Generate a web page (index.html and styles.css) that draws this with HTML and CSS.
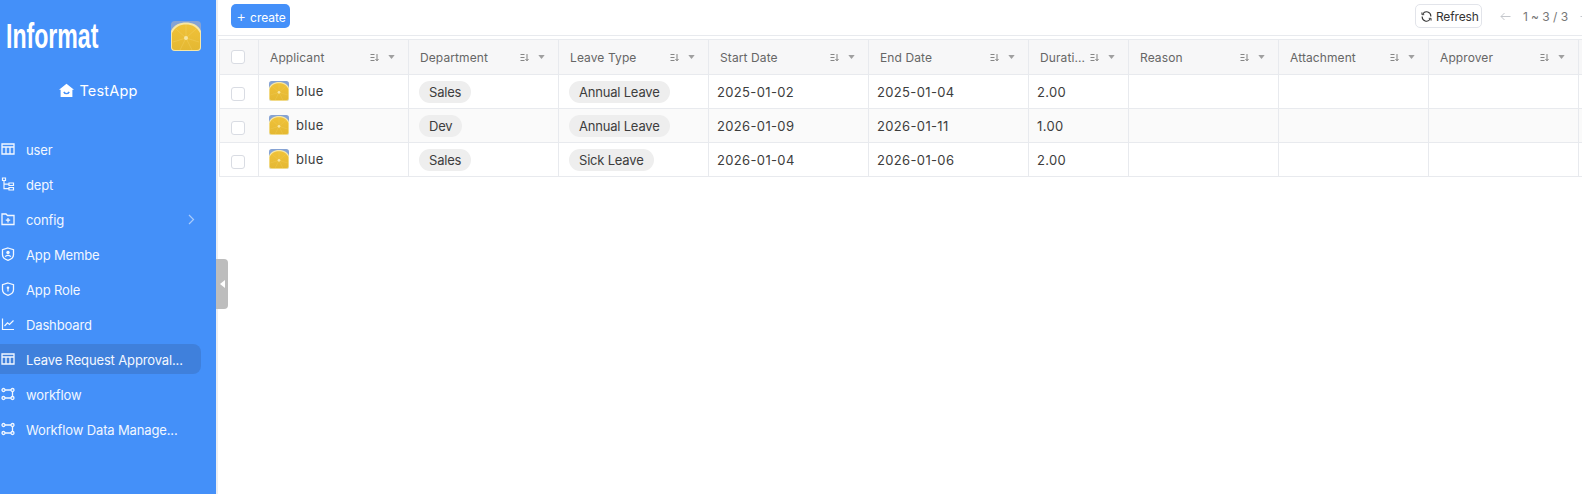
FILE: index.html
```html
<!DOCTYPE html>
<html lang="en">

<head>
    <meta charset="UTF-8">
    <meta name="viewport" content="width=device-width, initial-scale=1.0">
    <title>Leave Request Approval</title>
    <link rel="stylesheet" href="styles.css">
</head>

<body>
    <svg class="defs" width="0" height="0">
        <defs>
            <linearGradient id="lemon-fill" x1="0" y1="0" x2="0" y2="1">
                <stop offset="0" stop-color="#f0c238" />
                <stop offset="1" stop-color="#e4b833" />
            </linearGradient>
            <symbol id="lemon" viewBox="0 0 30 30">
                <rect width="30" height="30" rx="4" fill="#86a3d4" />
                <path d="M0 10 C3 3.500 9 1.500 15 1.500 C21 1.500 27 3.500 30 10 V26 a4 4 0 0 1 -4 4 H4 a4 4 0 0 1 -4 -4 Z" fill="#f7e7a6" />
                <path d="M1 12 C4 6 9 3.500 15 3.500 C21 3.500 26 6 29 12 V26 a3 3 0 0 1 -3 3 H4 a3 3 0 0 1 -3 -3 Z" fill="url(#lemon-fill)" />
                <path d="M15 17L5 8M15 17L15 4M15 17L25 8M15 17L28 21M15 17L2 21M15 17L9 29M15 17L21 29" stroke="#f5d365" stroke-width="0.600" opacity="0.700" />
                <circle cx="15" cy="17" r="2" fill="#f8e6a0" />
            </symbol>
            <symbol id="i-table" viewBox="0 0 14 14">
                <path d="M1 2h12v10H1zM1 5h12M5 5v7M9 5v7" fill="none" stroke="currentColor" stroke-width="1.300" />
            </symbol>
            <symbol id="i-tree" viewBox="0 0 14 14">
                <path d="M1.500 1h3v2.500h-3zM8 6h4.500v2.500H8zM8 10.500h4.500V13H8zM3 3.500V11.700h5M3 7.200h5" fill="none" stroke="currentColor" stroke-width="1.200" />
            </symbol>
            <symbol id="i-folder" viewBox="0 0 14 14">
                <path d="M1 2h4l1.500 1.500H13V12.500H1zM7 6v4.500M4.800 8.200h4.400" fill="none" stroke="currentColor" stroke-width="1.300" />
            </symbol>
            <symbol id="i-member" viewBox="0 0 14 14">
                <path d="M7 1l5.500 1.700v5C12.500 10.500 10 12.300 7 13.300 4 12.300 1.500 10.500 1.500 7.700v-5z" fill="none" stroke="currentColor" stroke-width="1.300" />
                <circle cx="7" cy="5.500" r="1.700" fill="currentColor" />
                <path d="M4.300 9.800C5 8 9 8 9.700 9.800" fill="none" stroke="currentColor" stroke-width="1.300" />
            </symbol>
            <symbol id="i-role" viewBox="0 0 14 14">
                <path d="M7 1l5.500 1.700v5C12.500 10.500 10 12.300 7 13.300 4 12.300 1.500 10.500 1.500 7.700v-5z" fill="none" stroke="currentColor" stroke-width="1.300" />
                <circle cx="7" cy="5.800" r="1.300" fill="currentColor" />
                <path d="M7 6.500v3" stroke="currentColor" stroke-width="1.200" />
            </symbol>
            <symbol id="i-chart" viewBox="0 0 14 14">
                <path d="M1.500 1.500V12.500H13M3.500 9l3-3.200 2 1.700L12.500 3.500" fill="none" stroke="currentColor" stroke-width="1.200" />
            </symbol>
            <symbol id="i-flow" viewBox="0 0 14 14">
                <circle cx="2.500" cy="3" r="1.500" fill="none" stroke="currentColor" stroke-width="1.300" />
                <circle cx="11.500" cy="3" r="1.500" fill="none" stroke="currentColor" stroke-width="1.300" />
                <circle cx="2.500" cy="11" r="1.500" fill="none" stroke="currentColor" stroke-width="1.300" />
                <circle cx="11.500" cy="11" r="1.500" fill="none" stroke="currentColor" stroke-width="1.300" />
                <path d="M4 3h6M11.500 4.500v5M10 11H4" fill="none" stroke="currentColor" stroke-width="1.300" />
            </symbol>
            <symbol id="i-sort" viewBox="0 0 9 9">
                <path d="M0.500 1.500h4M0.500 4.500h4M0.500 7.500h4M7 1v6.500M5.500 6l1.500 1.800L8.500 6" fill="none" stroke="currentColor" stroke-width="0.900" />
            </symbol>
            <symbol id="i-caret" viewBox="0 0 8 5">
                <path d="M0 0h8L4 5z" fill="currentColor" />
            </symbol>
            <symbol id="i-left" viewBox="0 0 11 9">
                <path d="M10.500 4.500H1M4.500 1L1 4.500 4.500 8" fill="none" stroke="currentColor" stroke-width="1" />
            </symbol>
            <symbol id="i-right" viewBox="0 0 11 9">
                <path d="M0.500 4.500H10M6.500 1L10 4.500 6.500 8" fill="none" stroke="currentColor" stroke-width="1" />
            </symbol>
        </defs>
    </svg>

    <aside class="sidebar">
        <div class="logo-row">
            <span class="logo-text">Informat</span>
            <svg class="logo-img"><use href="#lemon" /></svg>
        </div>

        <div class="app-name">
            <svg class="app-icon" viewBox="0 0 14 14">
                <path d="M7 .8L14 6.200H12.500V13H1.500V6.200H0Z" fill="#fff" />
                <path d="M4.500 8.300C5.500 10.500 8.500 10.500 9.500 8.300" fill="none" stroke="#4490f9" stroke-width="1.300" />
            </svg>
            <span>TestApp</span>
        </div>

        <nav class="menu">
            <a class="menu-item"><svg class="menu-icon"><use href="#i-table" /></svg><span class="menu-label">user</span></a>
            <a class="menu-item"><svg class="menu-icon"><use href="#i-tree" /></svg><span class="menu-label">dept</span></a>
            <a class="menu-item">
                <svg class="menu-icon"><use href="#i-folder" /></svg><span class="menu-label">config</span>
                <svg class="menu-arrow" viewBox="0 0 7 11"><path d="M1 1l4.500 4.500L1 10" fill="none" stroke="currentColor" stroke-width="1.200" /></svg>
            </a>
            <a class="menu-item"><svg class="menu-icon"><use href="#i-member" /></svg><span class="menu-label">App Membe</span></a>
            <a class="menu-item"><svg class="menu-icon"><use href="#i-role" /></svg><span class="menu-label">App Role</span></a>
            <a class="menu-item"><svg class="menu-icon"><use href="#i-chart" /></svg><span class="menu-label">Dashboard</span></a>
            <a class="menu-item active"><svg class="menu-icon"><use href="#i-table" /></svg><span class="menu-label">Leave Request Approval...</span></a>
            <a class="menu-item"><svg class="menu-icon"><use href="#i-flow" /></svg><span class="menu-label">workflow</span></a>
            <a class="menu-item"><svg class="menu-icon"><use href="#i-flow" /></svg><span class="menu-label">Workflow Data Manage...</span></a>
        </nav>
    </aside>

    <div class="collapse-handle"><span class="collapse-arrow"></span></div>

    <main class="content">
        <div class="toolbar">
            <button class="create-btn"><span class="plus">+</span>create</button>
            <div class="toolbar-right">
                <button class="refresh-btn">
                    <svg class="refresh-icon" viewBox="0 0 12 12">
                        <path d="M2 3.200A4.700 4.700 0 0 1 10.700 6M10 8.800A4.700 4.700 0 0 1 1.300 6" fill="none" stroke="#333" stroke-width="1.200" />
                        <path d="M1 1.500v2.500h2.500M11 10.500V8H8.500" fill="none" stroke="#333" stroke-width="1" />
                    </svg>
                    Refresh
                </button>
                <svg class="pager-arrow first"><use href="#i-left" /></svg>
                <span class="pager-text">1 ~ 3 / 3</span>
                <svg class="pager-arrow"><use href="#i-right" /></svg>
            </div>
        </div>

        <div class="table-wrap">
            <table class="grid">
                <colgroup>
                    <col class="col-check">
                    <col class="col-md">
                    <col class="col-md">
                    <col class="col-md">
                    <col class="col-lg">
                    <col class="col-lg">
                    <col class="col-sm">
                    <col class="col-md">
                    <col class="col-md">
                    <col class="col-md">
                    <col class="col-md">
                </colgroup>
                <thead>
                    <tr>
                        <th class="check-cell"><span class="check"></span></th>
                        <th><div class="th-inner"><span class="th-label">Applicant</span><svg class="sort"><use href="#i-sort" /></svg><svg class="caret"><use href="#i-caret" /></svg></div></th>
                        <th><div class="th-inner"><span class="th-label">Department</span><svg class="sort"><use href="#i-sort" /></svg><svg class="caret"><use href="#i-caret" /></svg></div></th>
                        <th><div class="th-inner"><span class="th-label">Leave Type</span><svg class="sort"><use href="#i-sort" /></svg><svg class="caret"><use href="#i-caret" /></svg></div></th>
                        <th><div class="th-inner"><span class="th-label">Start Date</span><svg class="sort"><use href="#i-sort" /></svg><svg class="caret"><use href="#i-caret" /></svg></div></th>
                        <th><div class="th-inner"><span class="th-label">End Date</span><svg class="sort"><use href="#i-sort" /></svg><svg class="caret"><use href="#i-caret" /></svg></div></th>
                        <th><div class="th-inner"><span class="th-label">Durati...</span><svg class="sort"><use href="#i-sort" /></svg><svg class="caret"><use href="#i-caret" /></svg></div></th>
                        <th><div class="th-inner"><span class="th-label">Reason</span><svg class="sort"><use href="#i-sort" /></svg><svg class="caret"><use href="#i-caret" /></svg></div></th>
                        <th><div class="th-inner"><span class="th-label">Attachment</span><svg class="sort"><use href="#i-sort" /></svg><svg class="caret"><use href="#i-caret" /></svg></div></th>
                        <th><div class="th-inner"><span class="th-label">Approver</span><svg class="sort"><use href="#i-sort" /></svg><svg class="caret"><use href="#i-caret" /></svg></div></th>
                        <th></th>
                    </tr>
                </thead>
                <tbody>
                    <tr>
                        <td class="check-cell"><span class="check"></span></td>
                        <td><div class="user"><svg class="avatar"><use href="#lemon" /></svg>blue</div></td>
                        <td><span class="tag">Sales</span></td>
                        <td><span class="tag">Annual Leave</span></td>
                        <td>2025-01-02</td>
                        <td>2025-01-04</td>
                        <td>2.00</td>
                        <td></td>
                        <td></td>
                        <td></td>
                        <td></td>
                    </tr>
                    <tr class="striped">
                        <td class="check-cell"><span class="check"></span></td>
                        <td><div class="user"><svg class="avatar"><use href="#lemon" /></svg>blue</div></td>
                        <td><span class="tag">Dev</span></td>
                        <td><span class="tag">Annual Leave</span></td>
                        <td>2026-01-09</td>
                        <td>2026-01-11</td>
                        <td>1.00</td>
                        <td></td>
                        <td></td>
                        <td></td>
                        <td></td>
                    </tr>
                    <tr>
                        <td class="check-cell"><span class="check"></span></td>
                        <td><div class="user"><svg class="avatar"><use href="#lemon" /></svg>blue</div></td>
                        <td><span class="tag">Sales</span></td>
                        <td><span class="tag">Sick Leave</span></td>
                        <td>2026-01-04</td>
                        <td>2026-01-06</td>
                        <td>2.00</td>
                        <td></td>
                        <td></td>
                        <td></td>
                        <td></td>
                    </tr>
                </tbody>
            </table>
        </div>
    </main>
</body>

</html>
```

FILE: styles.css
```css
* {
    box-sizing: border-box;
}

body {
    display: flex;
    height: 100vh;
    margin: 0;
    overflow: hidden;
    position: relative;
    background-color: white;
    font-family: "Inter", "Liberation Sans", sans-serif;
    font-size: 13px;
    color: #3d3d3d;
}

.defs {
    position: absolute;
}

.sidebar {
    flex: 0 0 216px;
    background-color: #4490f9;
    color: white;
}

.logo-row {
    display: flex;
    justify-content: space-between;
    align-items: center;
    height: 72px;
    padding: 0 15px 0 6px;
}

/* no condensed font installed, squeeze the bold one */
.logo-text {
    font-family: "Liberation Sans", sans-serif;
    font-size: 35px;
    font-weight: bold;
    transform: scaleX(0.66);
    transform-origin: left center;
}

.logo-img {
    width: 30px;
    height: 30px;
}

.app-name {
    display: flex;
    justify-content: center;
    align-items: center;
    gap: 5px;
    height: 36px;
    padding-right: 19px;
    font-size: 14.5px;
    letter-spacing: 0.2px;
}

.app-icon {
    width: 15px;
    height: 15px;
}

.menu {
    display: flex;
    flex-direction: column;
    gap: 5px;
    margin-top: 26px;
}

.menu-item {
    display: flex;
    align-items: center;
    width: 201px;
    height: 30px;
    border-radius: 0 8px 8px 0;
    padding-right: 6px;
    font-size: 13px;
    letter-spacing: -0.14px;
    color: #f2f7ff;
}

.menu-item.active {
    background-color: #3f80dc;
}

.menu-icon {
    flex: none;
    width: 14px;
    height: 14px;
    margin: 0 11px 0 1px;
}

.menu-label {
    flex: 1;
    padding-top: 1px;
    white-space: nowrap;
}

.menu-arrow {
    width: 7px;
    height: 11px;
    color: #a9cbfb;
}

.collapse-handle {
    position: absolute;
    left: 216px;
    top: 259px;
    display: flex;
    align-items: center;
    justify-content: center;
    width: 12px;
    height: 50px;
    border-radius: 0 4px 4px 0;
    background-color: #bdbdbd;
}

.collapse-arrow {
    border-top: 4px solid transparent;
    border-bottom: 4px solid transparent;
    border-right: 5px solid white;
}

.content {
    flex: 1;
    min-width: 0;
    border-left: 2px solid #eceef2;
}

.toolbar {
    display: flex;
    justify-content: space-between;
    align-items: flex-start;
    height: 36px;
    padding: 4px 0 0 13px;
    border-bottom: 1px solid #e8eaee;
    overflow: hidden;
}

.create-btn {
    height: 24px;
    width: 59px;
    padding: 0;
    border: none;
    border-radius: 5px;
    background-color: #4490f9;
    color: white;
    font-family: inherit;
    font-size: 12px;
    letter-spacing: -0.05px;
}

.plus {
    margin: 0 4px 0 1px;
    font-size: 15px;
    font-weight: 300;
}

.toolbar-right {
    display: flex;
    align-items: center;
    flex: none;
    height: 24px;
    margin-right: -9px;
}

.refresh-btn {
    display: flex;
    align-items: center;
    gap: 4px;
    height: 24px;
    width: 67px;
    padding: 0 0 0 5px;
    border: 1px solid #e2e4ea;
    border-radius: 5px;
    background-color: white;
    color: #333;
    font-family: inherit;
    font-size: 12px;
    letter-spacing: -0.15px;
}

.refresh-icon {
    width: 11px;
    height: 11px;
    flex: none;
}

.pager-arrow {
    width: 11px;
    height: 9px;
    color: #c4c7cc;
}

.pager-arrow.first {
    margin-left: 18px;
}

.pager-text {
    margin: 0 12px;
    font-size: 12px;
    letter-spacing: -0.05px;
    color: #777;
}

.table-wrap {
    padding: 3px 0 0 1px;
}

.grid {
    table-layout: fixed;
    width: 1400px;
    border-collapse: collapse;
    border-top: 1px solid #e8eaee;
    border-left: 1px solid #e8eaee;
}

.col-check {
    width: 39px;
}

.col-sm {
    width: 100px;
}

.col-md {
    width: 150px;
}

.col-lg {
    width: 160px;
}

.grid th,
.grid td {
    border-right: 1px solid #e8eaee;
    border-bottom: 1px solid #e8eaee;
    padding: 0 0 0 8px;
    text-align: left;
    white-space: nowrap;
}

.grid th {
    height: 35px;
    padding-left: 11px;
    background-color: #f7f7f8;
    font-weight: normal;
    font-size: 12px;
    letter-spacing: 0.1px;
    color: #666;
}

.grid td {
    height: 34px;
    letter-spacing: 0.35px;
}

.grid th.check-cell,
.grid td.check-cell {
    padding: 0 0 0 11px;
}

.grid td.check-cell .check {
    margin-top: 4px;
}

.striped td {
    background-color: #fafafa;
}

.check {
    display: block;
    width: 14px;
    height: 14px;
    border: 1px solid #d9dce3;
    border-radius: 3px;
    background-color: white;
}

.th-inner {
    display: flex;
    align-items: center;
    padding-right: 13px;
}

.th-label {
    flex: 1;
}

.sort {
    width: 9px;
    height: 9px;
    margin-right: 9px;
    color: #777;
}

.caret {
    width: 7px;
    height: 4px;
    color: #a0a0a0;
}

.user {
    display: flex;
    align-items: center;
    gap: 7px;
    margin-top: -1px;
    margin-left: 2px;
}

.avatar {
    width: 20px;
    height: 20px;
}

.tag {
    display: inline-block;
    height: 22px;
    margin-left: 2px;
    padding: 0 10px;
    border-radius: 11px;
    background-color: #eeeeee;
    line-height: 22px;
    letter-spacing: -0.2px;
    vertical-align: middle;
}
```
